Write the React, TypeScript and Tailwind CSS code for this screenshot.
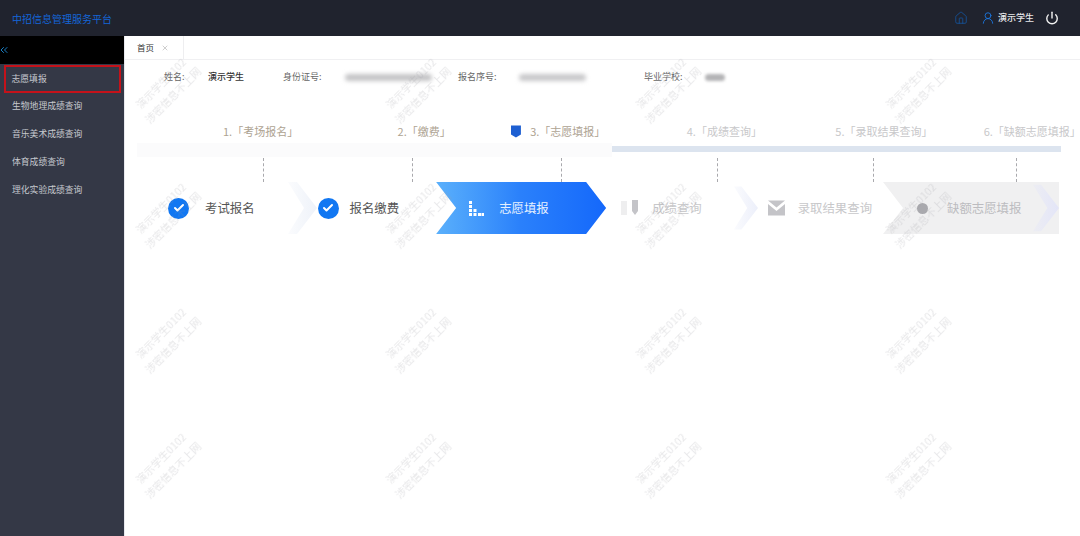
import React from "react";
import { House, UserRound, Power, ChevronsLeft, Check, X } from "lucide-react";

const menuItems = ["志愿填报", "生物地理成绩查询", "音乐美术成绩查询", "体育成绩查询", "理化实验成绩查询"];

const FaintChevron = ({ id, color, className }: { id: string; color: string; className: string }) => (
  <svg viewBox="0 0 29 52" className={className}>
    <defs>
      <linearGradient id={id} x1="0" y1="0" x2="1" y2="0">
        <stop offset="0" stopColor={color} stopOpacity="0.25" />
        <stop offset="1" stopColor={color} stopOpacity="1" />
      </linearGradient>
    </defs>
    <polygon points="0,0 9,0 29,26 9,52 0,52 16,26" fill={`url(#${id})`} />
  </svg>
);

const DoneIcon = () => (
  <div className="flex h-[21px] w-[21px] shrink-0 items-center justify-center rounded-full bg-[#1177f2]">
    <Check size={12} strokeWidth={4} className="text-white" />
  </div>
);

const Watermarks = () => (
  <div className="pointer-events-none absolute left-[-83px] top-[-10px] z-10 grid grid-cols-[repeat(4,250px)] grid-rows-[repeat(4,125px)]">
    {Array.from({ length: 16 }).map((_, i) => (
      <div key={i} className="flex items-center justify-center">
        <div className="-rotate-45 text-center text-[10.5px] leading-[17px] whitespace-nowrap text-[#9a9aa4]/25 blur-[0.4px]">
          <div>演示学生0102</div>
          <div>涉密信息不上网</div>
        </div>
      </div>
    ))}
  </div>
);

const App: React.FC = () => {
  return (
    <div className="flex h-[536px] w-[1080px] flex-col overflow-hidden bg-white font-['Noto_Sans_CJK_SC','Noto_Sans',sans-serif]">
      {/* header */}
      <header className="flex h-9 shrink-0 items-center bg-[#20232e] pl-3 pr-[21px]">
        <span className="text-[10px] text-[#1466d8]">中招信息管理服务平台</span>
        <div className="ml-auto flex items-center">
          <House size={14} strokeWidth={1.4} className="text-[#14549f]" />
          <UserRound size={14} strokeWidth={1.6} className="ml-[13px] text-[#1b74dc]" />
          <span className="ml-[3px] text-[9px] font-medium text-[#e8e8ea]">演示学生</span>
          <Power size={14} strokeWidth={2.4} className="ml-[11px] text-[#f2f2f2]" />
        </div>
      </header>

      <div className="flex min-h-0 flex-1">
        {/* sidebar */}
        <aside className="w-[124px] shrink-0 bg-[#343846]">
          <div className="flex h-7 items-center bg-black">
            <ChevronsLeft size={12} className="-ml-[2px] text-[#1a7fc4]" />
          </div>
          {menuItems.map((item, i) => (
            <div
              key={item}
              className={`flex h-7 items-center pl-3 text-[8.8px] text-[#c6c8ce] ${
                i === 0 ? "-mb-px ml-1 mr-[3px] mt-px box-border border-[2.5px] border-[#c4121a] !pl-[5.5px]" : ""
              }`}
            >
              {item}
            </div>
          ))}
        </aside>

        {/* main */}
        <main className="relative min-w-0 flex-1 overflow-hidden border-l border-[#e8e9ee]">
          <div className="flex h-6 border-b border-[#f0f0f2]">
            <div className="flex w-[59px] items-center border-r border-[#eeeeF0] pl-3 text-[8.5px] text-[#333]">
              首页
              <X size={8} className="ml-[7px] text-[#b5b5b5]" />
            </div>
          </div>

          {/* student info */}
          <div className="mt-[9px] flex h-4 items-center pl-[39px] text-[9px]">
            <span className="w-11 text-[#666]">姓名:</span>
            <span className="w-[75px] font-medium text-[#333]">演示学生</span>
            <span className="w-[62px] text-[#666]">身份证号:</span>
            <div className="h-[7px] w-[87px] rounded-sm bg-[#c4c4c6] blur-[2px]" />
            <span className="ml-[26px] w-[61px] text-[#666]">报名序号:</span>
            <div className="h-[7px] w-[67px] rounded-sm bg-[#c8c8ca] blur-[2px]" />
            <span className="ml-[58px] w-[61px] text-[#666]">毕业学校:</span>
            <div className="h-[7px] w-[20px] rounded-sm bg-[#b4b4b6] blur-[1.5px]" />
          </div>

          {/* progress labels */}
          <div className="mt-[37px] flex h-[18px] items-center text-[11px] text-[#aea392]">
            <span className="ml-[98px]">1.「考场报名」</span>
            <span className="ml-[100px]">2.「缴费」</span>
            <svg viewBox="0 0 12 13" className="ml-[60px] h-[13px] w-3 text-[#1d5fd2]">
              <path d="M1 0.5h10v9l-5 3-5-3z" fill="currentColor" />
            </svg>
            <span className="ml-[8px]">3.「志愿填报」</span>
            <span className="ml-[82px] text-[#c8c8ca]">4.「成绩查询」</span>
            <span className="ml-[74px] text-[#c8c8ca]">5.「录取结果查询」</span>
            <span className="ml-[52px] text-[#c8c8ca]">6.「缺额志愿填报」</span>
          </div>

          {/* progress bar */}
          <div className="ml-[12px] mt-[3px] flex h-[14px] w-[924px] items-center">
            <div className="h-[14px] w-[475px] bg-[#fbfbfc]" />
            <div className="mb-[2px] h-[6px] flex-1 bg-[#dce4ef]" />
          </div>

          {/* connectors */}
          <div className="relative mt-px h-6">
            <div className="absolute left-[138px] top-0 h-6 border-l border-dashed border-[#a9a9ad]" />
            <div className="absolute left-[287px] top-0 h-6 border-l border-dashed border-[#a9a9ad]" />
            <div className="absolute left-[436px] top-0 h-6 border-l border-dashed border-[#a9a9ad]" />
            <div className="absolute left-[592px] top-0 h-6 border-l border-dashed border-[#a9a9ad]" />
            <div className="absolute left-[748px] top-0 h-6 border-l border-dashed border-[#a9a9ad]" />
            <div className="absolute left-[891px] top-0 h-6 border-l border-dashed border-[#a9a9ad]" />
          </div>

          {/* steps */}
          <div className="flex h-[52px] items-center pl-[43px] text-[12.4px]">
            <DoneIcon />
            <span className="ml-4 text-[#555]">考试报名</span>
            <FaintChevron id="c1" color="#eef2f9" className="ml-[33px] h-[52px] w-[29px] shrink-0" />
            <div className="ml-[1px]">
              <DoneIcon />
            </div>
            <span className="ml-[11px] text-[#555]">报名缴费</span>

            {/* active step */}
            <div className="ml-[37px] flex h-[52px] w-[170px] shrink-0 items-center bg-gradient-to-r from-[#5bb0fb] via-[#2a80fb] to-[#1568fb] pl-[33px] text-[#e6f1ff] [clip-path:polygon(0_0,150px_0,170px_26px,150px_52px,0_52px,20px_26px)]">
              <svg viewBox="0 0 15 15" className="h-[15px] w-[15px] shrink-0 text-white">
                <g fill="currentColor">
                  <rect x="0" y="0" width="3" height="3" />
                  <rect x="0" y="4" width="3" height="3" />
                  <rect x="0" y="8" width="3" height="3" />
                  <rect x="0" y="12" width="3" height="3" />
                  <rect x="4.5" y="8" width="3" height="3" />
                  <rect x="4.5" y="12" width="3" height="3" />
                  <rect x="9" y="12" width="3" height="3" />
                  <rect x="12.5" y="12" width="2.5" height="3" />
                </g>
              </svg>
              <span className="ml-[15px]">志愿填报</span>
            </div>

            {/* step 4 */}
            <svg viewBox="0 0 18 16" className="ml-[15px] h-4 w-[18px] shrink-0">
              <rect x="0" y="1" width="6" height="14" fill="#eeeeef" />
              <path d="M11 0h6v11l-3 4-3-4z" fill="#c4c4c8" />
            </svg>
            <span className="ml-[13px] text-[#c8c8ca]">成绩查询</span>

            {/* step 5 */}
            <FaintChevron id="c2" color="#eceffa" className="ml-[32px] h-[52px] w-[24px] shrink-0" />
            <svg viewBox="0 0 17 16" className="ml-[10px] h-4 w-[17px] shrink-0">
              <path d="M0 0.5h17l-8.5 7z M0 4l8.5 7 8.5-7v11.5h-17z" fill="#c4c4c8" />
            </svg>
            <span className="ml-[13px] text-[#c8c8ca]">录取结果查询</span>

            {/* step 6 */}
            <div className="relative ml-[11px] flex h-[52px] w-[176px] shrink-0 items-center bg-[#f0f0f1] pl-[34px] text-[#bcbcc0] [clip-path:polygon(0_0,176px_0,176px_52px,0_52px,20px_26px)]">
              <div className="h-[11px] w-[11px] shrink-0 rounded-full bg-[#a9a9ae]" />
              <span className="ml-[19px]">缺额志愿填报</span>
              <FaintChevron id="c3" color="#e3e5f8" className="absolute right-0 top-0 h-[52px] w-[26px]" />
            </div>
          </div>

          <Watermarks />
        </main>
      </div>
    </div>
  );
};

export default App;
